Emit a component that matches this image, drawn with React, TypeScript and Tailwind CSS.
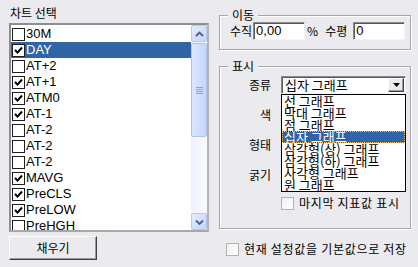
import React from "react";

const KR = "font-['Noto_Sans_CJK_KR','Noto_Sans',sans-serif]";
const LIST =
  "font-['Liberation_Sans_Narrow','Liberation_Sans','Noto_Sans_CJK_KR',sans-serif]";

type Row = { name: string; checked: boolean; selected?: boolean };

const rows: Row[] = [
  { name: "30M", checked: false },
  { name: "DAY", checked: true, selected: true },
  { name: "AT+2", checked: false },
  { name: "AT+1", checked: true },
  { name: "ATM0", checked: true },
  { name: "AT-1", checked: true },
  { name: "AT-2", checked: false },
  { name: "AT-2", checked: false },
  { name: "AT-2", checked: false },
  { name: "MAVG", checked: true },
  { name: "PreCLS", checked: true },
  { name: "PreLOW", checked: true },
  { name: "PreHGH", checked: false },
];

const graphTypes = [
  "선 그래프",
  "막대 그래프",
  "점 그래프",
  "십자 그래프",
  "삼각형(상) 그래프",
  "삼각형(하) 그래프",
  "사각형 그래프",
  "원 그래프",
];

const CheckMark = () => (
  <svg width="9" height="9" viewBox="0 0 9 9">
    <polyline
      points="1,4 3.5,6.5 8,1.5"
      fill="none"
      stroke="black"
      strokeWidth="1.9"
    />
  </svg>
);

const Chevron = ({ down }: { down?: boolean }) => (
  <svg width="9" height="6" viewBox="0 0 9 6">
    <polyline
      points={down ? "1,1.5 4.5,5 8,1.5" : "1,5 4.5,1.5 8,5"}
      fill="none"
      stroke="#4d6185"
      strokeWidth="1.8"
    />
  </svg>
);

// 리스트 안의 체크박스
const ListCheck = ({ checked }: { checked: boolean }) => (
  <div className="ml-[1px] w-[13px] h-[13px] shrink-0 border border-[#1e1e1e] bg-white flex items-center justify-center">
    {checked && <CheckMark />}
  </div>
);

// XP 스타일 체크박스
const FlatCheck = ({ label }: { label: string }) => (
  <div className="flex items-center h-[14px]">
    <div className="w-[13px] h-[13px] border border-[#b2b2b2] bg-gradient-to-br from-[#f0f0f0] to-white" />
    <span className="ml-[5px] text-[12px] leading-[14px] tracking-[0.7px]">
      {label}
    </span>
  </div>
);

const SunkenBox = ({
  className,
  children,
}: {
  className?: string;
  children?: React.ReactNode;
}) => (
  <div
    className={`h-[18px] bg-white border border-[#8a8a8a] border-r-[#f4f4f4] border-b-[#f4f4f4] shadow-[inset_1px_1px_0_#5a5a5a] ${className ?? ""}`}
  >
    {children}
  </div>
);

const Combo = ({ value }: { value: string }) => (
  <SunkenBox className="w-[125px] flex items-center">
    <span className="flex-1 pl-[3px] text-[13px] leading-[16px] overflow-hidden whitespace-nowrap">
      {value}
    </span>
    <div className="mr-[1px] w-[16px] h-[14px] bg-[#ebeaef] border border-white border-r-[#404040] border-b-[#404040] shadow-[inset_-1px_-1px_0_#9a9a9a] flex items-center justify-center">
      <svg width="7" height="4" viewBox="0 0 7 4">
        <polygon points="0,0 7,0 3.5,4" fill="black" />
      </svg>
    </div>
  </SunkenBox>
);

export default function App() {
  return (
    <div
      className={`w-[418px] h-[267px] bg-[#ebeaef] flex text-black overflow-hidden ${KR}`}
    >
      {/* 왼쪽: 차트 선택 */}
      <div className="ml-[9px] w-[200px] flex flex-col pt-[6px]">
        <div className="pl-[1px] text-[12px] leading-[14px]">차트 선택</div>
        <div className="mt-[3px] h-[209px] flex border-2 border-[#8e8e8e] border-r-[#b4b4b4] border-b-[#a8a8a8] bg-white">
          <div className={`flex-1 pt-[1px] overflow-hidden ${LIST}`}>
            {rows.map((r, i) => (
              <div
                key={i}
                className={`h-[16px] flex items-center ${
                  r.selected ? "bg-[#3163a8] text-white" : ""
                }`}
              >
                <ListCheck checked={r.checked} />
                <span className="ml-[1px] text-[13px] leading-[16px]">
                  {r.name}
                </span>
              </div>
            ))}
          </div>
          <div className="w-[16px] flex flex-col bg-gradient-to-r from-[#eef2fb] to-[#f9fafd]">
            <div className="h-[17px] rounded-[2px] border border-[#b5c8ef] bg-gradient-to-br from-[#e4ecfd] to-[#c4d5f8] flex items-center justify-center">
              <Chevron />
            </div>
            <div className="h-[94px] mt-[1px] rounded-[2px] border border-[#adc2ec] bg-gradient-to-r from-[#dbe6fc] to-[#c6d7f9] flex flex-col items-center justify-center gap-[1px]">
              <div className="w-[7px] h-[1px] bg-[#8ea3cf]" />
              <div className="w-[7px] h-[1px] bg-[#8ea3cf]" />
              <div className="w-[7px] h-[1px] bg-[#8ea3cf]" />
              <div className="w-[7px] h-[1px] bg-[#8ea3cf]" />
            </div>
            <div className="flex-1" />
            <div className="h-[17px] rounded-[2px] border border-[#b5c8ef] bg-gradient-to-br from-[#e4ecfd] to-[#c4d5f8] flex items-center justify-center">
              <Chevron down />
            </div>
          </div>
        </div>
        <button className="mt-[4px] w-[88px] h-[24px] bg-[#ebeaef] border border-white border-r-[#404040] border-b-[#404040] shadow-[inset_-1px_-1px_0_#9a9a9a] text-[12px] leading-[14px]">
          채우기
        </button>
      </div>

      {/* 오른쪽 */}
      <div className="ml-[10px] w-[192px] flex flex-col pt-[8px]">
        <fieldset className="border border-[#a5a5aa] shadow-[inset_1px_1px_0_white,1px_1px_0_white] pb-[9px]">
          <legend className="ml-[8px] px-[4px] bg-[#ebeaef] text-[12px] leading-[14px]">
            이동
          </legend>
          <div className="flex items-center pl-[10px] text-[12px] leading-[14px]">
            <span>수직</span>
            <SunkenBox className="ml-[1px] w-[52px]">
              <span className={`pl-[2px] text-[13px] leading-[16px] ${LIST}`}>
                0,00
              </span>
            </SunkenBox>
            <span className="ml-[2px]">%</span>
            <span className="ml-[7px]">수평</span>
            <SunkenBox className="ml-[6px] w-[52px]">
              <span className={`pl-[2px] text-[13px] leading-[16px] ${LIST}`}>
                0
              </span>
            </SunkenBox>
          </div>
        </fieldset>

        <fieldset className="mt-[9px] border border-[#a5a5aa] shadow-[inset_1px_1px_0_white,1px_1px_0_white] pt-[3px] pb-[18px]">
          <legend className="ml-[8px] px-[4px] bg-[#ebeaef] text-[12px] leading-[14px]">
            표시
          </legend>
          <div className="grid grid-cols-[51px_125px] gap-x-[10px] gap-y-[12px] text-[12px]">
            <span className="text-right leading-[18px]">종류</span>
            <div className="relative">
              <Combo value="십자 그래프" />
              <div className="absolute top-[18px] left-0 z-10 w-[125px] h-[98px] border border-black bg-white">
                {graphTypes.map((g, i) => (
                  <div
                    key={g}
                    className={`h-[12px] pl-[2px] text-[13px] leading-[12px] whitespace-nowrap ${
                      i === 3
                        ? "bg-[#3163a8] text-white outline-1 outline-dotted outline-[#e7c46a] -outline-offset-1"
                        : ""
                    }`}
                  >
                    {g}
                  </div>
                ))}
              </div>
            </div>
            <span className="text-right leading-[18px]">색</span>
            <Combo value="" />
            <span className="text-right leading-[18px]">형태</span>
            <Combo value="" />
            <span className="text-right leading-[18px]">굵기</span>
            <Combo value="" />
          </div>
          <div className="mt-[12px] ml-[61px]">
            <FlatCheck label="마지막 지표값 표시" />
          </div>
        </fieldset>

        <div className="mt-[13px] ml-[7px]">
          <FlatCheck label="현재 설정값을 기본값으로 저장" />
        </div>
      </div>
    </div>
  );
}
